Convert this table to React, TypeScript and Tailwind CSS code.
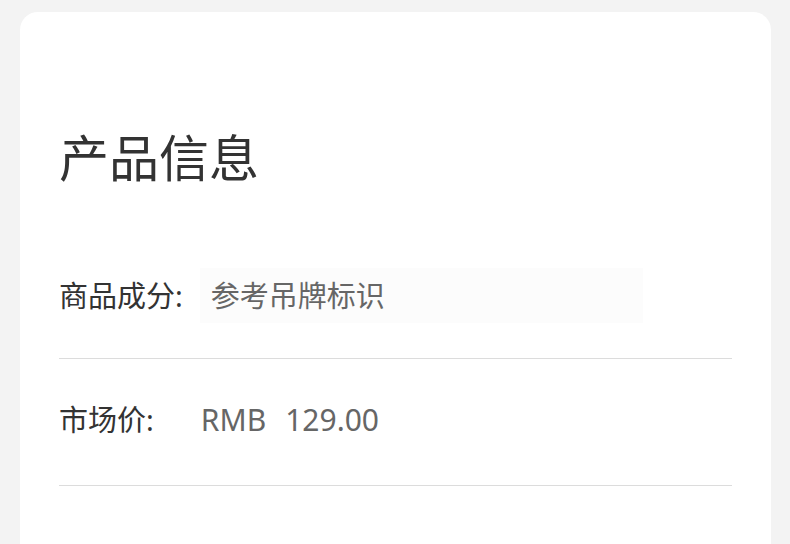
import React from "react";

export default function App() {
  return (
    <div
      className="h-[544px] bg-[#f3f3f3] pt-[12px] px-[20px] overflow-hidden"
      style={{ fontFamily: '"Noto Sans", "Noto Sans CJK SC", sans-serif' }}
    >
      <div className="bg-white rounded-[18px] px-[39px] pt-[121px] pb-[120px] w-[751px]">
        <h1 className="text-[50px] leading-[50px] text-[#333] font-normal">产品信息</h1>

        <div className="mt-[85px] pb-[35px] border-b border-[#dcdcdc] flex items-center text-[29px] leading-[29px]">
          <span className="text-[#333]">商品成分:</span>
          <span className="ml-[17px] w-[443px] h-[55px] pl-[11px] flex items-center bg-[#fcfcfc] text-[#666]">
            参考吊牌标识
          </span>
        </div>

        <div className="pt-[46px] pb-[51px] border-b border-[#dcdcdc] flex items-center text-[29px] leading-[29px]">
          <span className="text-[#333]">市场价:</span>
          <span className="ml-[47px] text-[30px] text-[#666]">RMB</span>
          <span className="ml-[19px] text-[30px] text-[#666]">129.00</span>
        </div>
      </div>
    </div>
  );
}
